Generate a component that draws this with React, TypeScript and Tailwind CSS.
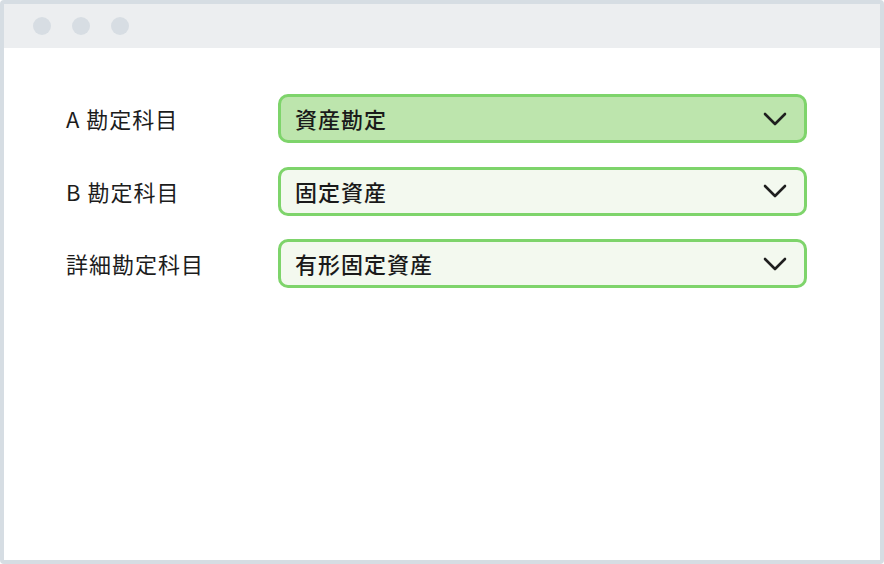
const rows = [
  { label: 'A 勘定科目', value: '資産勘定', active: true },
  { label: 'B 勘定科目', value: '固定資産', active: false },
  { label: '詳細勘定科目', value: '有形固定資産', active: false },
];

function Chevron() {
  return (
    <svg width="24" height="14" viewBox="0 0 24 14" fill="none">
      <path d="M2 2l10 10L22 2" stroke="#1f1f1f" strokeWidth="2.6" strokeLinecap="round" strokeLinejoin="round" />
    </svg>
  );
}

export default function App() {
  return (
    <div
      className="w-[884px] h-[564px] bg-white border-[4px] border-[#d6dde3] rounded-[4px] flex flex-col overflow-hidden"
      style={{ fontFamily: '"Noto Sans CJK JP", "Noto Sans", sans-serif' }}
    >
      {/* title bar */}
      <div className="h-[44px] bg-[#eceef0] flex items-center gap-[21px] pl-[29px]">
        <span className="w-[18px] h-[18px] rounded-full bg-[#d7dde3]" />
        <span className="w-[18px] h-[18px] rounded-full bg-[#d7dde3]" />
        <span className="w-[18px] h-[18px] rounded-full bg-[#d7dde3]" />
      </div>

      {/* form */}
      <div className="flex flex-col gap-[23.5px] pt-[46px] pl-[62px] pr-[73px]">
        {rows.map((r) => (
          <div key={r.label} className="flex items-center">
            <div className="w-[212px] text-[22px] text-[#1c1c1c] tracking-[1px]">{r.label}</div>
            <div
              className={`flex-1 h-[49px] rounded-[10px] border-[3px] border-[#7ed46b] flex items-center justify-between pl-[14px] pr-[17px] ${
                r.active ? 'bg-[#bde5ad]' : 'bg-[#f3f9ef]'
              }`}
            >
              <span className="text-[22px] font-medium tracking-[1px] text-[#1a1a1a]">{r.value}</span>
              <Chevron />
            </div>
          </div>
        ))}
      </div>
    </div>
  );
}
